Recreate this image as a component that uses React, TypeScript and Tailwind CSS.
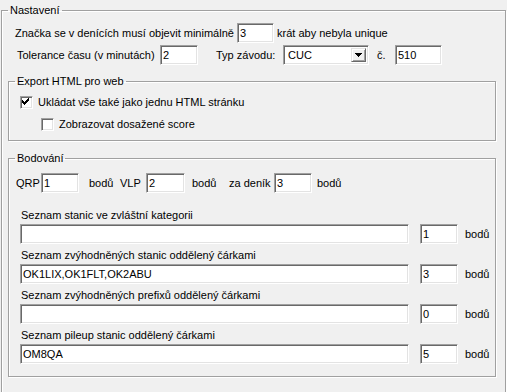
const SUNKEN =
  'border border-t-[#a0a0a0] border-l-[#a0a0a0] border-b-white border-r-white shadow-[inset_1px_1px_0_#696969,inset_-1px_-1px_0_#e3e3e3] bg-white';

const ETCHED = 'border border-[#a0a0a0] shadow-[inset_1px_1px_0_#fff,1px_1px_0_#fff]';

function Edit({ value = '', className = '' }: { value?: string; className?: string }) {
  return (
    <input
      readOnly
      value={value}
      className={`${SUNKEN} h-[20px] px-[2px] leading-[16px] outline-none text-black ${className}`}
    />
  );
}

function CheckBox({ checked, label }: { checked: boolean; label: string }) {
  return (
    <label className="flex h-[17px] items-center">
      <span className={`${SUNKEN} block h-[13px] w-[13px] shrink-0`}>
        {checked && (
          <svg width="11" height="11" viewBox="0 0 11 11" className="block" shapeRendering="crispEdges">
            {[2, 3, 4, 3, 2, 1, 0].map((top, i) => (
              <rect key={i} x={1 + i} y={1 + top} width="1" height="3" fill="#000" />
            ))}
          </svg>
        )}
      </span>
      <span className="ml-[5px]">{label}</span>
    </label>
  );
}

function Combo({ value }: { value: string }) {
  return (
    <div className={`${SUNKEN} flex h-[20px] w-[86px] items-stretch p-[2px]`}>
      <span className="flex-1 pl-[2px] leading-[14px]">{value}</span>
      <span className="flex w-[15px] items-center justify-center border border-t-[#e3e3e3] border-l-[#e3e3e3] border-r-[#696969] border-b-[#696969] bg-[#f0f0f0] shadow-[inset_1px_1px_0_#fff,inset_-1px_-1px_0_#a0a0a0]">
        <svg width="7" height="4" viewBox="0 0 7 4" shapeRendering="crispEdges">
          <path d="M0 0h7v1h-1v1h-1v1h-1v1h-1v-1h-1v-1h-1v-1h-1z" fill="#000" />
        </svg>
      </span>
    </div>
  );
}

const LISTS = [
  { label: 'Seznam stanic ve zvláštní kategorii', value: '', points: '1' },
  { label: 'Seznam zvýhodněných stanic oddělený čárkami', value: 'OK1LIX,OK1FLT,OK2ABU', points: '3' },
  { label: 'Seznam zvýhodněných prefixů oddělený čárkami', value: '', points: '0' },
  { label: 'Seznam pileup stanic oddělený čárkami', value: 'OM8QA', points: '5' },
];

export default function App() {
  return (
    <div className="h-[392px] w-[507px] overflow-hidden bg-[#f0f0f0] pt-[4px] font-['Liberation_Sans',Arial,sans-serif] text-[11px] text-black">
      <fieldset className={`${ETCHED} ml-[1px] h-[420px] w-[505px] pl-[6px]`}>
        <legend className="px-[2px] leading-[13px]">Nastavení</legend>

        {/* minimální výskyt */}
        <div className="mt-[6px] flex items-center">
          <span className="ml-[7px] w-[222px]">Značka se v denících musí objevit minimálně</span>
          <Edit value="3" className="w-[37px]" />
          <span className="ml-[3px]">krát aby nebyla unique</span>
        </div>

        {/* tolerance + typ závodu */}
        <div className="mt-[2px] flex items-center">
          <span className="ml-[9px] w-[143px]">Tolerance času (v minutách)</span>
          <Edit value="2" className="w-[38px]" />
          <span className="ml-[18px] w-[67px]">Typ závodu:</span>
          <Combo value="CUC" />
          <span className="ml-[8px] w-[18px]">č.</span>
          <Edit value="510" className="w-[47px]" />
        </div>

        <fieldset className={`${ETCHED} mt-[10px] w-[488px] pb-[7px] pl-[6px]`}>
          <legend className="px-[2px] leading-[13px]">Export HTML pro web</legend>
          <div className="ml-[5px] mt-[6px]">
            <CheckBox checked label="Ukládat vše také jako jednu HTML stránku" />
          </div>
          <div className="ml-[26px] mt-[5px]">
            <CheckBox checked={false} label="Zobrazovat dosažené score" />
          </div>
        </fieldset>

        <fieldset className={`${ETCHED} mt-[11px] w-[488px] pb-[12px] pl-[6px]`}>
          <legend className="px-[2px] leading-[13px]">Bodování</legend>

          <div className="mt-[8px] flex items-center">
            <span className="ml-[1px] w-[25px]">QRP</span>
            <Edit value="1" className="w-[38px]" />
            <span className="ml-[10px] w-[31px]">bodů</span>
            <span className="w-[26px]">VLP</span>
            <Edit value="2" className="w-[39px]" />
            <span className="ml-[7px] w-[37px]">bodů</span>
            <span className="w-[45px]">za deník</span>
            <Edit value="3" className="w-[38px]" />
            <span className="ml-[5px]">bodů</span>
          </div>

          <div className="mt-[16px] flex flex-col">
            {LISTS.map((row, i) => (
              <div key={row.label} className={i === 0 ? '' : 'mt-[5px]'}>
                <div className="ml-[6px] h-[13px] leading-[13px]">{row.label}</div>
                <div className="mt-[2px] flex items-center">
                  <Edit value={row.value} className="ml-[5px] w-[389px]" />
                  <Edit value={row.points} className="ml-[11px] w-[38px]" />
                  <span className="ml-[7px]">bodů</span>
                </div>
              </div>
            ))}
          </div>
        </fieldset>
      </fieldset>
    </div>
  );
}
